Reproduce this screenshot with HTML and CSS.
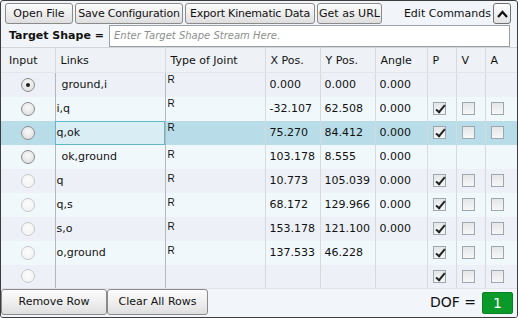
FILE: index.html
```html
<!DOCTYPE html>
<html lang="en">
<head>
    <meta charset="UTF-8">
    <title>PlanarMechanism Simulator</title>
    <link rel="stylesheet" href="styles.css">
</head>
<body>
    <div class="frame">
        <div class="toolbar">
            <button class="tool-btn btn-open">Open File</button>
            <button class="tool-btn btn-save">Save Configuration</button>
            <button class="tool-btn btn-export">Export Kinematic Data</button>
            <button class="tool-btn btn-url">Get as URL</button>
            <span class="edit-label">Edit Commands</span>
            <button class="chevron-btn">
                <svg width="11" height="8" viewBox="0 0 11 8"><polyline points="1,7 5.5,2 10,7" fill="none" stroke="#111" stroke-width="2.2"/></svg>
            </button>
        </div>

        <div class="target-row">
            <span class="target-label">Target Shape =</span>
            <input class="target-input" type="text" placeholder="Enter Target Shape Stream Here.">
        </div>

        <table class="joints">
            <colgroup>
                <col style="width:54px"><col style="width:110px"><col style="width:100px">
                <col style="width:55px"><col style="width:55px"><col style="width:52px">
                <col style="width:29px"><col style="width:29px"><col style="width:32px">
            </colgroup>
            <thead>
                <tr>
                    <th class="c-input">Input</th>
                    <th>Links</th>
                    <th>Type of Joint</th>
                    <th>X Pos.</th>
                    <th>Y Pos.</th>
                    <th>Angle</th>
                    <th>P</th>
                    <th>V</th>
                    <th>A</th>
                </tr>
            </thead>
            <tbody>
                <tr class="odd">
                    <td class="c-input"><span class="radio checked"></span></td>
                    <td class="links ground">ground,i</td>
                    <td class="joint">R</td>
                    <td>0.000</td><td>0.000</td><td>0.000</td>
                    <td></td><td></td><td></td>
                </tr>
                <tr class="even">
                    <td class="c-input"><span class="radio"></span></td>
                    <td class="links">i,q</td>
                    <td class="joint">R</td>
                    <td>-32.107</td><td>62.508</td><td>0.000</td>
                    <td class="box"><span class="check on"></span></td>
                    <td class="box"><span class="check"></span></td>
                    <td class="box"><span class="check"></span></td>
                </tr>
                <tr class="selected">
                    <td class="c-input"><span class="radio"></span></td>
                    <td class="links focus">q,ok</td>
                    <td class="joint">R</td>
                    <td>75.270</td><td>84.412</td><td>0.000</td>
                    <td class="box"><span class="check on"></span></td>
                    <td class="box"><span class="check"></span></td>
                    <td class="box"><span class="check"></span></td>
                </tr>
                <tr class="even">
                    <td class="c-input"><span class="radio"></span></td>
                    <td class="links ground">ok,ground</td>
                    <td class="joint low">R</td>
                    <td>103.178</td><td>8.555</td><td>0.000</td>
                    <td></td><td></td><td></td>
                </tr>
                <tr class="odd">
                    <td class="c-input"><span class="radio off"></span></td>
                    <td class="links">q</td>
                    <td class="joint low">R</td>
                    <td>10.773</td><td>105.039</td><td>0.000</td>
                    <td class="box"><span class="check on"></span></td>
                    <td class="box"><span class="check"></span></td>
                    <td class="box"><span class="check"></span></td>
                </tr>
                <tr class="even">
                    <td class="c-input"><span class="radio off"></span></td>
                    <td class="links">q,s</td>
                    <td class="joint low">R</td>
                    <td>68.172</td><td>129.966</td><td>0.000</td>
                    <td class="box"><span class="check on"></span></td>
                    <td class="box"><span class="check"></span></td>
                    <td class="box"><span class="check"></span></td>
                </tr>
                <tr class="odd">
                    <td class="c-input"><span class="radio off"></span></td>
                    <td class="links">s,o</td>
                    <td class="joint low">R</td>
                    <td>153.178</td><td>121.100</td><td>0.000</td>
                    <td class="box"><span class="check on"></span></td>
                    <td class="box"><span class="check"></span></td>
                    <td class="box"><span class="check"></span></td>
                </tr>
                <tr class="even">
                    <td class="c-input"><span class="radio off"></span></td>
                    <td class="links">o,ground</td>
                    <td class="joint low">R</td>
                    <td>137.533</td><td>46.228</td><td></td>
                    <td class="box"><span class="check on"></span></td>
                    <td class="box"><span class="check"></span></td>
                    <td class="box"><span class="check"></span></td>
                </tr>
                <tr class="odd last">
                    <td class="c-input"><span class="radio off"></span></td>
                    <td class="links"></td>
                    <td class="joint"></td>
                    <td></td><td></td><td></td>
                    <td class="box"><span class="check on"></span></td>
                    <td class="box"><span class="check"></span></td>
                    <td class="box"><span class="check"></span></td>
                </tr>
            </tbody>
        </table>

        <div class="footer">
            <button class="foot-btn btn-remove">Remove Row</button>
            <button class="foot-btn btn-clear">Clear All Rows</button>
            <span class="dof-label">DOF =</span>
            <span class="dof-value">1</span>
        </div>
    </div>
</body>
</html>
```

FILE: styles.css
```css
* {
    margin: 0;
    padding: 0;
    box-sizing: border-box;
}

body {
    font-family: 'DejaVu Sans', Verdana, sans-serif;
    font-size: 11px;
    color: #111;
    background: #fff;
    width: 518px;
    height: 318px;
    overflow: hidden;
}

.frame {
    width: 518px;
    height: 318px;
    border: 1px solid #3c3c3c;
    border-radius: 3px;
    background: #f1f5f9;
    display: flex;
    flex-direction: column;
    overflow: hidden;
}

/* barra de herramientas */
.toolbar {
    display: flex;
    align-items: center;
    gap: 2px;
    padding: 2px 6px 0 4px;
    height: 23px;
}

button {
    font-family: inherit;
    font-size: 11px;
    color: #111;
    cursor: pointer;
}

.tool-btn {
    height: 21px;
    padding: 0;
    text-align: center;
    white-space: nowrap;
    letter-spacing: -0.2px;
    border: 1px solid #8a8a8a;
    border-radius: 3px;
    background: linear-gradient(#fbfbfb 0%, #eeeeee 50%, #dedede 100%);
}

.btn-open { width: 68px; letter-spacing: 0; }
.btn-save { width: 108px; }
.btn-export { width: 130px; }
.btn-url { width: 65px; letter-spacing: 0; }

.edit-label {
    margin-left: auto;
}

.chevron-btn {
    width: 18px;
    height: 21px;
    border: 1px solid #6f6f6f;
    border-radius: 3px;
    background: linear-gradient(#fdfdfd, #e4e4e4);
    display: flex;
    align-items: center;
    justify-content: center;
}

/* forma objetivo */
.target-row {
    display: flex;
    align-items: center;
    height: 23px;
    padding: 0 7px 0 8px;
}

.target-label {
    font-weight: 700;
    width: 100px;
}

.target-input {
    flex: 1;
    height: 22px;
    border: 1px solid #9aa0a6;
    background: #fff;
    font-family: inherit;
    font-size: 10px;
    padding: 0 4px;
    outline: none;
}

.target-input::placeholder {
    color: #8e8e8e;
    font-style: italic;
}

/* tabla de juntas */
.joints {
    width: 516px;
    table-layout: fixed;
    border-collapse: collapse;
    border-top: 1px solid #d2d6da;
}

.joints th {
    height: 25px;
    font-weight: 400;
    text-align: left;
    padding-left: 5px;
    background: #eef2f6;
    border-left: 1px solid #d6dadd;
    border-bottom: 1px solid #e2e6ea;
}

.joints td {
    height: 24px;
    padding-left: 4px;
    white-space: nowrap;
    border-left: 1px solid #d6dadd;
}

.joints tr.last td {
    height: 23px;
}

.joints th.c-input {
    padding-left: 8px;
    border-left: none;
}

.joints td.c-input {
    border-left: none;
    padding-left: 20px;
}

.joints td.links {
    padding-left: 1px;
    border-left-color: #b4b8bc;
}

.joints td.links.ground {
    padding-left: 6px;
}

.joints td.joint {
    vertical-align: top;
    padding: 1px 0 0 2px;
    font-family: 'Liberation Sans', Arial, sans-serif;
    font-size: 10px;
    line-height: 12px;
    border-left-color: #b4b8bc;
}

.joints td.joint.low {
    padding-top: 4px;
}

.joints td.box {
    padding-left: 5px;
}

tr.odd td {
    background: #edf1f7;
}

tr.even td {
    background: #f1f8fb;
}

tr.selected td {
    background: #b9dde8;
}

.joints td.focus {
    background: #d9eef4;
    outline: 1px solid #63b7c8;
    outline-offset: -1px;
}

.radio {
    display: block;
    width: 14px;
    height: 14px;
    border-radius: 50%;
    border: 1px solid #8b8d8f;
    background: radial-gradient(circle at 50% 40%, #fafafa 0%, #e6e6e6 60%, #d2d2d2 100%);
    position: relative;
}

.radio.off {
    border-color: #c6c8ca;
    background: radial-gradient(circle at 50% 40%, #fcfcfc 0%, #f0f0f0 100%);
}

.radio.checked::after {
    content: '';
    position: absolute;
    left: 4px;
    top: 4px;
    width: 4px;
    height: 4px;
    border-radius: 50%;
    background: #1e1e1e;
}

.check {
    display: block;
    width: 13px;
    height: 13px;
    border: 1px solid #9ea6ae;
    background: linear-gradient(#e4e6e8, #f7f7f7);
    position: relative;
}

.check.on::after {
    content: '';
    position: absolute;
    left: 4px;
    top: 0px;
    width: 3px;
    height: 8px;
    border-right: 2px solid #222;
    border-bottom: 2px solid #222;
    transform: rotate(40deg);
}

/* pie */
.footer {
    display: flex;
    align-items: flex-start;
    flex: 1;
    background: #f2f6fa;
    border-top: 1px solid #e0e4e8;
}

.foot-btn {
    height: 26px;
    border: 1px solid #8a8a8a;
    border-radius: 3px;
    background: linear-gradient(#fbfbfb 0%, #efefef 50%, #dfdfdf 100%);
}

.btn-remove { width: 106px; }
.btn-clear { width: 101px; }

.dof-label {
    margin-left: auto;
    margin-top: 5px;
    font-size: 14px;
}

.dof-value {
    margin: 3px 4px 0 6px;
    width: 31px;
    height: 22px;
    background: #0a9a2a;
    border: 1px solid #0b7f24;
    border-radius: 2px;
    color: #fff;
    font-size: 14px;
    text-align: center;
    line-height: 20px;
}
```
